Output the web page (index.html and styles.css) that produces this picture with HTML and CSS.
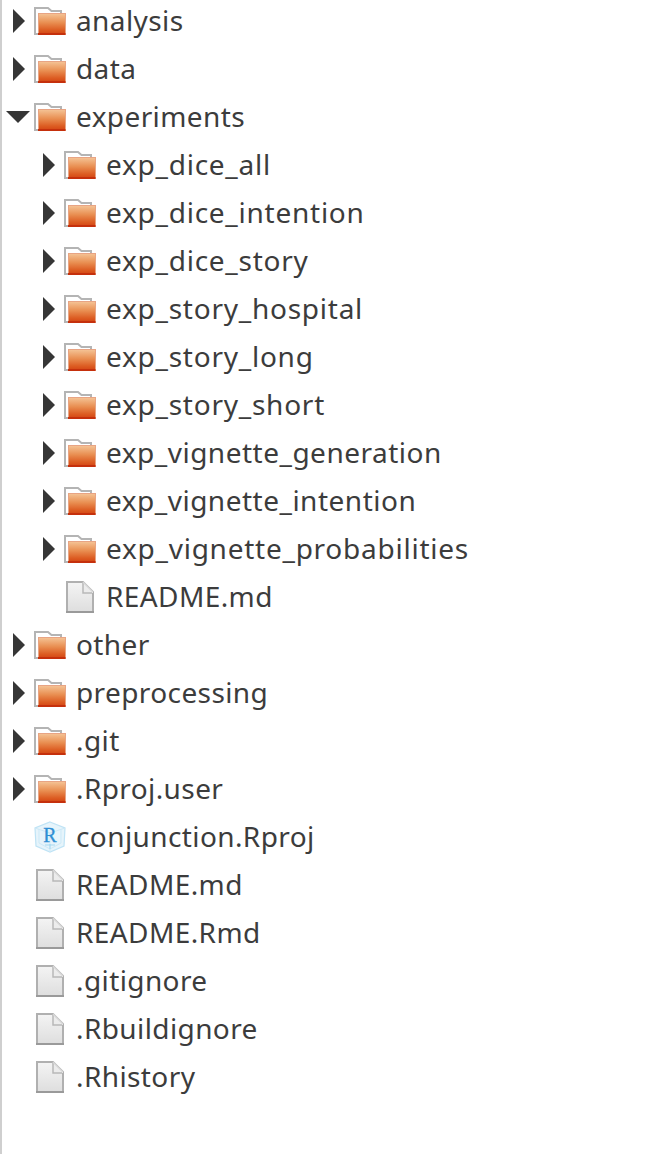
FILE: index.html
```html
<!DOCTYPE html>
<html lang="en">
<head>
<meta charset="utf-8">
<title>Files</title>
<link rel="stylesheet" href="styles.css">
</head>
<body>
<svg class="defs" width="0" height="0" aria-hidden="true">
  <defs>
    <linearGradient id="fg" x1="0" y1="0" x2="0" y2="1">
      <stop offset="0" stop-color="#f4c192"/>
      <stop offset="0.45" stop-color="#e98f52"/>
      <stop offset="0.85" stop-color="#dc5c22"/>
      <stop offset="1" stop-color="#d64c18"/>
    </linearGradient>
    <linearGradient id="pg" x1="0" y1="0" x2="0" y2="1">
      <stop offset="0" stop-color="#f4f4f4"/>
      <stop offset="1" stop-color="#dedede"/>
    </linearGradient>
    <symbol id="arrow-r" viewBox="0 0 24 24"><path d="M7 0 L19 12 L7 24 Z" fill="#363636"/></symbol>
    <symbol id="arrow-d" viewBox="0 0 24 24"><path d="M0 6 H24 L12 18 Z" fill="#363636"/></symbol>
    <symbol id="folder" viewBox="0 0 32 32">
      <path d="M1 30 V3 H14 L17.500 6 H27 V10" fill="#fff" stroke="#b4b4b4" stroke-width="2"/>
      <path d="M1 29 H5" stroke="#b4b4b4" stroke-width="2" fill="none"/>
      <rect x="4" y="8" width="28" height="22" fill="#e8a484"/>
      <rect x="5" y="9" width="26" height="19" fill="url(#fg)"/>
      <rect x="4" y="28" width="27.500" height="2" fill="#c5300c"/>
    </symbol>
    <symbol id="file" viewBox="0 0 32 32">
      <path d="M3 1 H19 L29 11 V31 H3 Z" fill="url(#pg)" stroke="#b0b0b0" stroke-width="2"/>
      <path d="M19 1 L29 11 L29 12 H19 Z" fill="#ececec"/>
      <path d="M19 2 V12 H28" fill="none" stroke="#b8b8b8" stroke-width="1.500"/>
      <path d="M19 1 L29 11" fill="none" stroke="#d6d6d6" stroke-width="1.500"/>
      <path d="M2 31 H30" stroke="#9a9a9a" stroke-width="2"/>
    </symbol>
    <symbol id="rproj" viewBox="0 0 32 32">
      <path d="M16 1 L31 7 L30 25 L16 31 L2 25 L1 7 Z" fill="#e6f4fb" stroke="#bfe3f5" stroke-width="1.200"/>
      <path d="M1 7 L16 12 L31 7 M16 12 V31 M5 8 V22 L16 28 L27 22 V8" fill="none" stroke="#cde9f7" stroke-width="1"/>
      <text x="16" y="21" class="r-letter">R</text>
      <path d="M11 24 H21 M16 23 V28" stroke="#a5d8f0" stroke-width="1" fill="none"/>
    </symbol>
  </defs>
</svg>
<ul class="tree">
  <li class="row"><svg class="arrow"><use href="#arrow-r"/></svg><svg class="icon"><use href="#folder"/></svg><span class="name">analysis</span></li>
  <li class="row"><svg class="arrow"><use href="#arrow-r"/></svg><svg class="icon"><use href="#folder"/></svg><span class="name">data</span></li>
  <li class="row"><svg class="arrow"><use href="#arrow-d"/></svg><svg class="icon"><use href="#folder"/></svg><span class="name">experiments</span></li>
  <li class="row sub"><svg class="arrow"><use href="#arrow-r"/></svg><svg class="icon"><use href="#folder"/></svg><span class="name exp">exp_dice_all</span></li>
  <li class="row sub"><svg class="arrow"><use href="#arrow-r"/></svg><svg class="icon"><use href="#folder"/></svg><span class="name exp">exp_dice_intention</span></li>
  <li class="row sub"><svg class="arrow"><use href="#arrow-r"/></svg><svg class="icon"><use href="#folder"/></svg><span class="name exp">exp_dice_story</span></li>
  <li class="row sub"><svg class="arrow"><use href="#arrow-r"/></svg><svg class="icon"><use href="#folder"/></svg><span class="name exp">exp_story_hospital</span></li>
  <li class="row sub"><svg class="arrow"><use href="#arrow-r"/></svg><svg class="icon"><use href="#folder"/></svg><span class="name exp">exp_story_long</span></li>
  <li class="row sub"><svg class="arrow"><use href="#arrow-r"/></svg><svg class="icon"><use href="#folder"/></svg><span class="name exp">exp_story_short</span></li>
  <li class="row sub"><svg class="arrow"><use href="#arrow-r"/></svg><svg class="icon"><use href="#folder"/></svg><span class="name exp tight">exp_vignette_generation</span></li>
  <li class="row sub"><svg class="arrow"><use href="#arrow-r"/></svg><svg class="icon"><use href="#folder"/></svg><span class="name exp tight">exp_vignette_intention</span></li>
  <li class="row sub"><svg class="arrow"><use href="#arrow-r"/></svg><svg class="icon"><use href="#folder"/></svg><span class="name exp">exp_vignette_probabilities</span></li>
  <li class="row sub"><span class="arrow"></span><svg class="icon"><use href="#file"/></svg><span class="name">README.md</span></li>
  <li class="row"><svg class="arrow"><use href="#arrow-r"/></svg><svg class="icon"><use href="#folder"/></svg><span class="name">other</span></li>
  <li class="row"><svg class="arrow"><use href="#arrow-r"/></svg><svg class="icon"><use href="#folder"/></svg><span class="name">preprocessing</span></li>
  <li class="row"><svg class="arrow"><use href="#arrow-r"/></svg><svg class="icon"><use href="#folder"/></svg><span class="name">.git</span></li>
  <li class="row"><svg class="arrow"><use href="#arrow-r"/></svg><svg class="icon"><use href="#folder"/></svg><span class="name">.Rproj.user</span></li>
  <li class="row"><span class="arrow"></span><svg class="icon"><use href="#rproj"/></svg><span class="name">conjunction.Rproj</span></li>
  <li class="row"><span class="arrow"></span><svg class="icon"><use href="#file"/></svg><span class="name">README.md</span></li>
  <li class="row"><span class="arrow"></span><svg class="icon"><use href="#file"/></svg><span class="name">README.Rmd</span></li>
  <li class="row"><span class="arrow"></span><svg class="icon"><use href="#file"/></svg><span class="name">.gitignore</span></li>
  <li class="row"><span class="arrow"></span><svg class="icon"><use href="#file"/></svg><span class="name">.Rbuildignore</span></li>
  <li class="row"><span class="arrow"></span><svg class="icon"><use href="#file"/></svg><span class="name">.Rhistory</span></li>
</ul>
</body>
</html>
```
FILE: styles.css
```css
html, body {
  margin: 0;
  padding: 0;
  background: #fff;
  height: 100%;
  overflow: hidden;
}
body {
  border-left: 2px solid #cfcfcf;
  box-sizing: border-box;
  font-family: "Noto Sans", "Open Sans", sans-serif;
  color: #3c3c3c;
}
.defs {
  display: block;
  height: 0;
}
.tree {
  list-style: none;
  margin: -3px 0 0;
  padding: 0 0 0 4px;
}
.row {
  display: flex;
  align-items: center;
  height: 48px;
  font-size: 28px;
  white-space: nowrap;
}
.row.sub {
  padding-left: 30px;
}
.arrow {
  flex: none;
  width: 24px;
  height: 24px;
  margin-right: 4px;
}
.icon {
  flex: none;
  width: 32px;
  height: 32px;
  margin-right: 10px;
}
.name {
  line-height: 48px;
  padding-bottom: 3px;
  letter-spacing: 0.4px;
}
.name.exp {
  letter-spacing: 0.75px;
}
.name.exp.tight {
  letter-spacing: 0.5px;
}
.r-letter {
  font-family: "Liberation Serif", serif;
  font-size: 20px;
  fill: #2f8fd4;
  stroke: #2f8fd4;
  stroke-width: 0.3px;
  text-anchor: middle;
}
```
